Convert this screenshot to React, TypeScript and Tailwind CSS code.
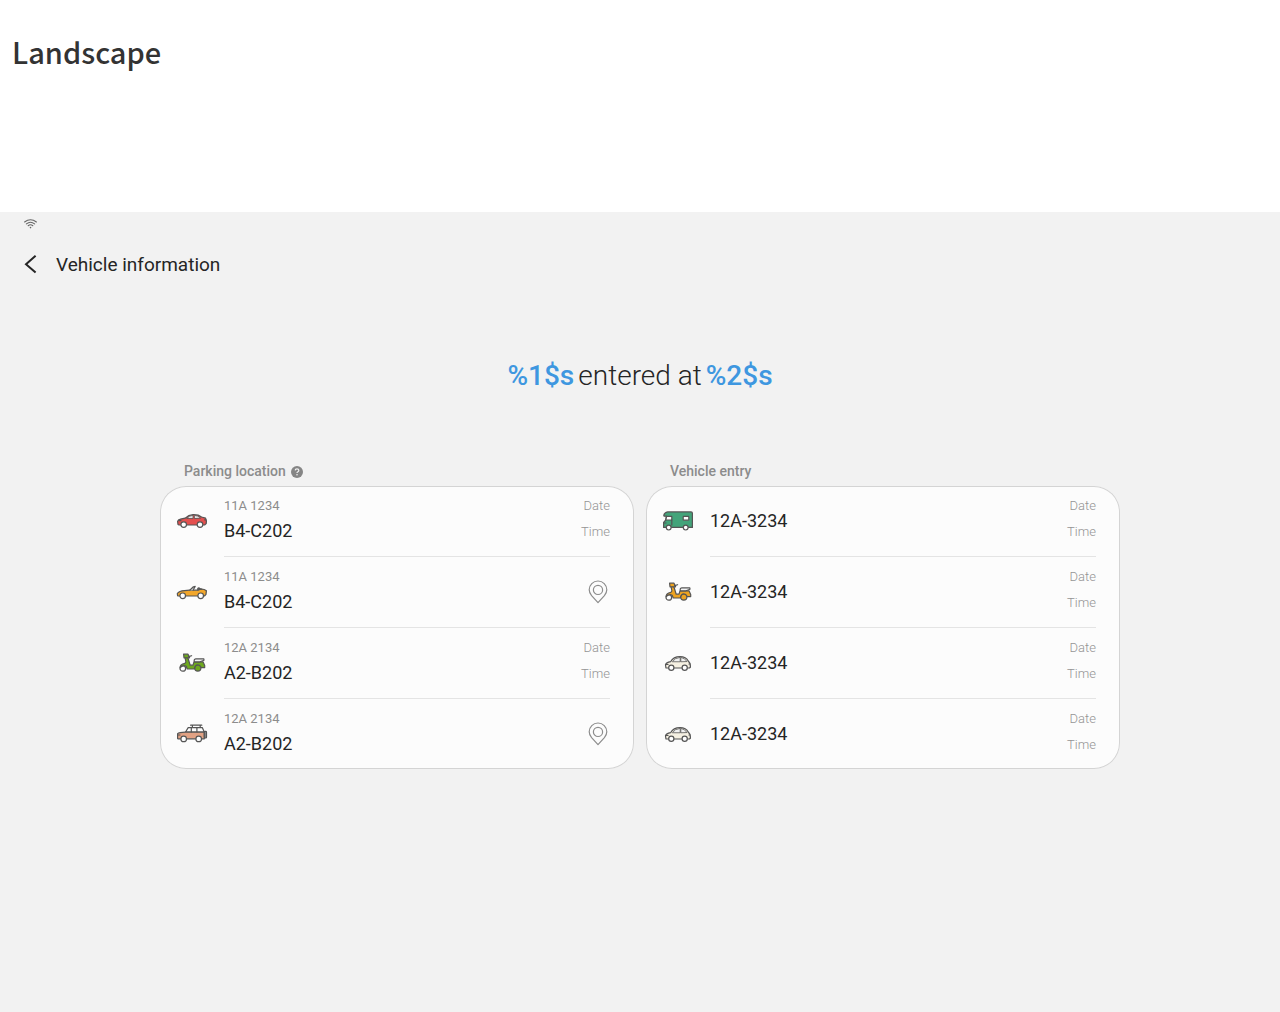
import type { ReactNode } from "react";

const STROKE = "#555555";

function Icon({ children }: { children: ReactNode }) {
  return (
    <svg
      className="mb-px size-8 shrink-0"
      viewBox="0 0 32 32"
      fill="none"
      stroke={STROKE}
      strokeWidth="1.2"
      strokeLinecap="round"
      strokeLinejoin="round"
      aria-hidden="true"
    >
      {children}
    </svg>
  );
}

function RedCar() {
  return (
    <Icon>
      <path
        d="M2 19.5 1.6 16.4Q2 14.6 4.5 14.1L9.2 13.2Q12.5 10 17 9.7Q22.5 9.5 25.5 12L29.6 13.2Q30.8 15.5 30.2 18.6L28.6 20H3Z"
        fill="#E4504F"
      />
      <path d="M11 13.2Q13.5 10.4 17 10.3V13.2ZM18.4 13.2V10.3Q22 10.4 24.4 12.9Z" fill="#E3E5E6" strokeWidth="0.8" />
      <path d="M3 15.6H5M28.6 14.8H30" />
      <circle cx="7.7" cy="19.6" r="2.8" fill="#fff" />
      <circle cx="24" cy="19.6" r="2.8" fill="#fff" />
    </Icon>
  );
}

function Convertible() {
  return (
    <Icon>
      <path
        d="M1.6 19.6 1.3 17.5Q3 15 8.5 14.6L13.5 14.2H22L25.2 13Q28.5 13 30.4 14.8L30 18.4 28.5 20H2Z"
        fill="#F2A72C"
      />
      <path d="M13.8 14.2 17.4 10.8 19.2 10.4 17 14.2" fill="#E3E5E6" />
      <path d="M21.8 14V12.4Q22.8 11.4 23.8 12.6L26 13.3" fill={STROKE} />
      <circle cx="6.7" cy="19.8" r="2.8" fill="#fff" />
      <circle cx="24.7" cy="19.8" r="2.8" fill="#fff" />
    </Icon>
  );
}

function Scooter({ color }: { color: string }) {
  return (
    <Icon>
      <circle cx="6.8" cy="21.4" r="2.8" fill="#fff" />
      <circle cx="21.8" cy="21" r="3.1" fill={color} />
      <path
        d="M9 10.5H11.8L14.2 18.2H17L18 14.8H27L28.7 18.5V20.6H25.2Q24 17.9 21.8 17.9Q19 17.9 18.3 22H11.2L10.2 19.2Q7 17.8 4.2 20.6Q4 17.4 8.8 16.4L9.9 15Z"
        fill={color}
      />
      <path d="M7.6 7.2H12L13.6 10.8H8Z" fill={color} />
      <path d="M12.6 9.6 15.6 8.7" />
      <path d="M18.2 13.8Q18 11.8 20.2 11.9H27.8L28 13.2 24 14.8H18.4Z" fill="#F4F4F4" />
    </Icon>
  );
}

function Suv() {
  return (
    <Icon>
      <path d="M14.6 7.2H25.8M16.4 7.4V9.4M24.2 7.4V9.4" />
      <path d="M9.4 14.2 12.2 9.6H26.3L28.3 14.2Z" fill="#fff" />
      <path d="M1.6 20.6V15.7Q3 14.5 9.4 14.2H28.3V20.8H2Z" fill="#E2A284" />
      <path d="M15.3 9.8V14M20.9 9.8V14M2 17H4" />
      <rect x="28.3" y="13.4" width="2.2" height="6.6" rx="0.8" fill="#8A8A8A" />
      <circle cx="7.7" cy="20.9" r="2.8" fill="#fff" />
      <circle cx="22.7" cy="20.9" r="2.8" fill="#fff" />
    </Icon>
  );
}

function Camper() {
  return (
    <Icon>
      <path
        d="M1.8 10.4Q2.2 7.6 5.8 6.9H29Q30.4 6.9 30.4 8.3V22.4H1.6V17.4L3.8 15 4.4 11.2H2Z"
        fill="#43A47A"
      />
      <path d="M3.8 15 4.6 11.4H9.8V15Z" fill="#fff" />
      <path d="M9.8 15V20M1.8 18H4" />
      <rect x="21.2" y="11.4" width="5.6" height="3.8" rx="0.5" fill="#fff" />
      <circle cx="6.7" cy="22.6" r="2.4" fill="#fff" />
      <circle cx="23.7" cy="22.6" r="2.4" fill="#fff" />
    </Icon>
  );
}

function Compact() {
  return (
    <Icon>
      <path
        d="M3.9 20.8 3.5 17.6Q4.2 15.6 8.6 14.7Q11.4 9.7 18 9.7Q24 9.7 26.4 14.2Q28.6 16 28.4 20.2L27.4 21H4Z"
        fill="#F5F0E2"
      />
      <path d="M10.6 14.4Q12.8 10.7 18.2 10.4V14.4ZM18.8 14.4V10.4Q23 11 24.8 14.2Z" fill="#F1F1F1" strokeWidth="0.8" />
      <path d="M4.4 17.4H6M27 17H28" />
      <circle cx="9.3" cy="20.8" r="2.6" fill="#fff" />
      <circle cx="22.7" cy="20.8" r="2.6" fill="#fff" />
    </Icon>
  );
}

function Pin() {
  return (
    <svg className="size-6" viewBox="0 0 24 24" fill="none" stroke="#8C8C8C" strokeWidth="1.2" strokeLinejoin="round" aria-hidden="true">
      <path d="M12 22.6 5.6 15.6Q3.2 12.8 3.2 9.8A8.8 8.8 0 0 1 20.8 9.8Q20.8 12.8 18.4 15.6Z" />
      <circle cx="12" cy="9.9" r="4.6" />
    </svg>
  );
}

function Stamp() {
  return (
    <div className="flex flex-col pb-1 text-right text-[13px] leading-[26px] font-light text-[#949494]">
      <span>Date</span>
      <span>Time</span>
    </div>
  );
}

const parking = [
  { icon: <RedCar />, plate: "11A 1234", spot: "B4-C202", pin: false },
  { icon: <Convertible />, plate: "11A 1234", spot: "B4-C202", pin: true },
  { icon: <Scooter color="#6EA91E" />, plate: "12A 2134", spot: "A2-B202", pin: false },
  { icon: <Suv />, plate: "12A 2134", spot: "A2-B202", pin: true },
];

const entries = [
  { icon: <Camper />, plate: "12A-3234" },
  { icon: <Scooter color="#EDA321" />, plate: "12A-3234" },
  { icon: <Compact />, plate: "12A-3234" },
  { icon: <Compact />, plate: "12A-3234" },
];

function Card({ title, children }: { title: ReactNode; children: ReactNode }) {
  return (
    <section>
      <h2 className="flex h-[30px] items-center gap-1 pl-6 text-sm font-medium text-[#8c8c8c]">{title}</h2>
      <ul className="rounded-[26px] bg-[#fcfcfc] ring-1 ring-[#d4d4d4] ring-inset">{children}</ul>
    </section>
  );
}

function Row({ icon, children }: { icon: ReactNode; children: ReactNode }) {
  return (
    <li className="group flex items-center gap-4 pr-6 pl-4">
      {icon}
      <div className="flex h-[71px] grow items-center justify-between border-b border-[#e4e4e4] group-last:h-[70px] group-last:border-b-0">
        {children}
      </div>
    </li>
  );
}

export default function App() {
  return (
    <div className="flex min-h-screen flex-col bg-white font-['Roboto',sans-serif] text-[#252525]">
      <div className="h-[212px] px-3 pt-7">
        <h1 className="font-['Noto_Sans_CJK_KR',sans-serif] text-[29px] leading-[46px] font-medium text-[#333333]">Landscape</h1>
      </div>
      <div className="grow bg-[#f2f2f2] pb-12">
        <div className="flex h-6 items-center px-6">
          <svg className="h-3 w-[13px]" viewBox="0 0 13 12" fill="none" stroke="#666666" strokeWidth="1.1" strokeLinecap="round" role="img" aria-label="Wi-Fi">
            <path d="M.6 4Q6.5-.6 12.4 4M2.4 5.9Q6.5 2.6 10.6 5.9M4.2 7.7Q6.5 5.9 8.8 7.7" />
            <circle cx="6.5" cy="9.6" r=".8" fill="#666666" stroke="none" />
          </svg>
        </div>
        <header className="flex h-14 items-center gap-4 px-[18px]">
          <button type="button" aria-label="Back" className="flex h-6 w-[22px] items-center justify-center">
            <svg className="h-6 w-6 shrink-0" viewBox="0 0 24 24" fill="none" stroke="#252525" strokeWidth="2">
              <path d="M18.6 3.8 9 12.2 18.6 20.6" />
            </svg>
          </button>
          <p className="text-[19px] leading-[26px] pt-0.5">Vehicle information</p>
        </header>
        <main className="mx-auto max-w-[960px]">
          <p className="flex justify-center gap-1 pt-16 text-[28px] leading-10 font-light">
            <span className="font-medium text-[#3e97e0]">%1$s</span>
            <span>entered at</span>
            <span className="font-medium text-[#3e97e0]">%2$s</span>
          </p>
          <div className="grid grid-cols-2 gap-3 pt-[60px]">
            <Card
              title={
                <>
                  Parking location
                  <button type="button" aria-label="Help" className="flex size-[14px] items-center">
                    <svg className="size-[14px]" viewBox="0 0 14 14" fill="none" aria-hidden="true">
                      <circle cx="7" cy="7.9" r="6" fill="#858585" />
                      <path d="M5.2 6.4Q5.3 4.9 7 4.9T8.8 6.4Q8.8 7.2 7.9 7.7 7 8.2 7 9" stroke="#f2f2f2" strokeWidth="1.2" />
                      <circle cx="7" cy="10.7" r=".8" fill="#f2f2f2" />
                    </svg>
                  </button>
                </>
              }
            >
              {parking.map((p, i) => (
                <Row key={i} icon={p.icon}>
                  <div className="pb-1">
                    <p className="text-[13px] leading-6 text-[#8c8c8c]">{p.plate}</p>
                    <p className="text-lg leading-[26px]">{p.spot}</p>
                  </div>
                  {p.pin ? (
                    <button type="button" aria-label={"Show " + p.spot + " on map"}>
                      <Pin />
                    </button>
                  ) : (
                    <Stamp />
                  )}
                </Row>
              ))}
            </Card>
            <Card title="Vehicle entry">
              {entries.map((e, i) => (
                <Row key={i} icon={e.icon}>
                  <p className="text-lg leading-[26px]">{e.plate}</p>
                  <Stamp />
                </Row>
              ))}
            </Card>
          </div>
        </main>
      </div>
    </div>
  );
}
